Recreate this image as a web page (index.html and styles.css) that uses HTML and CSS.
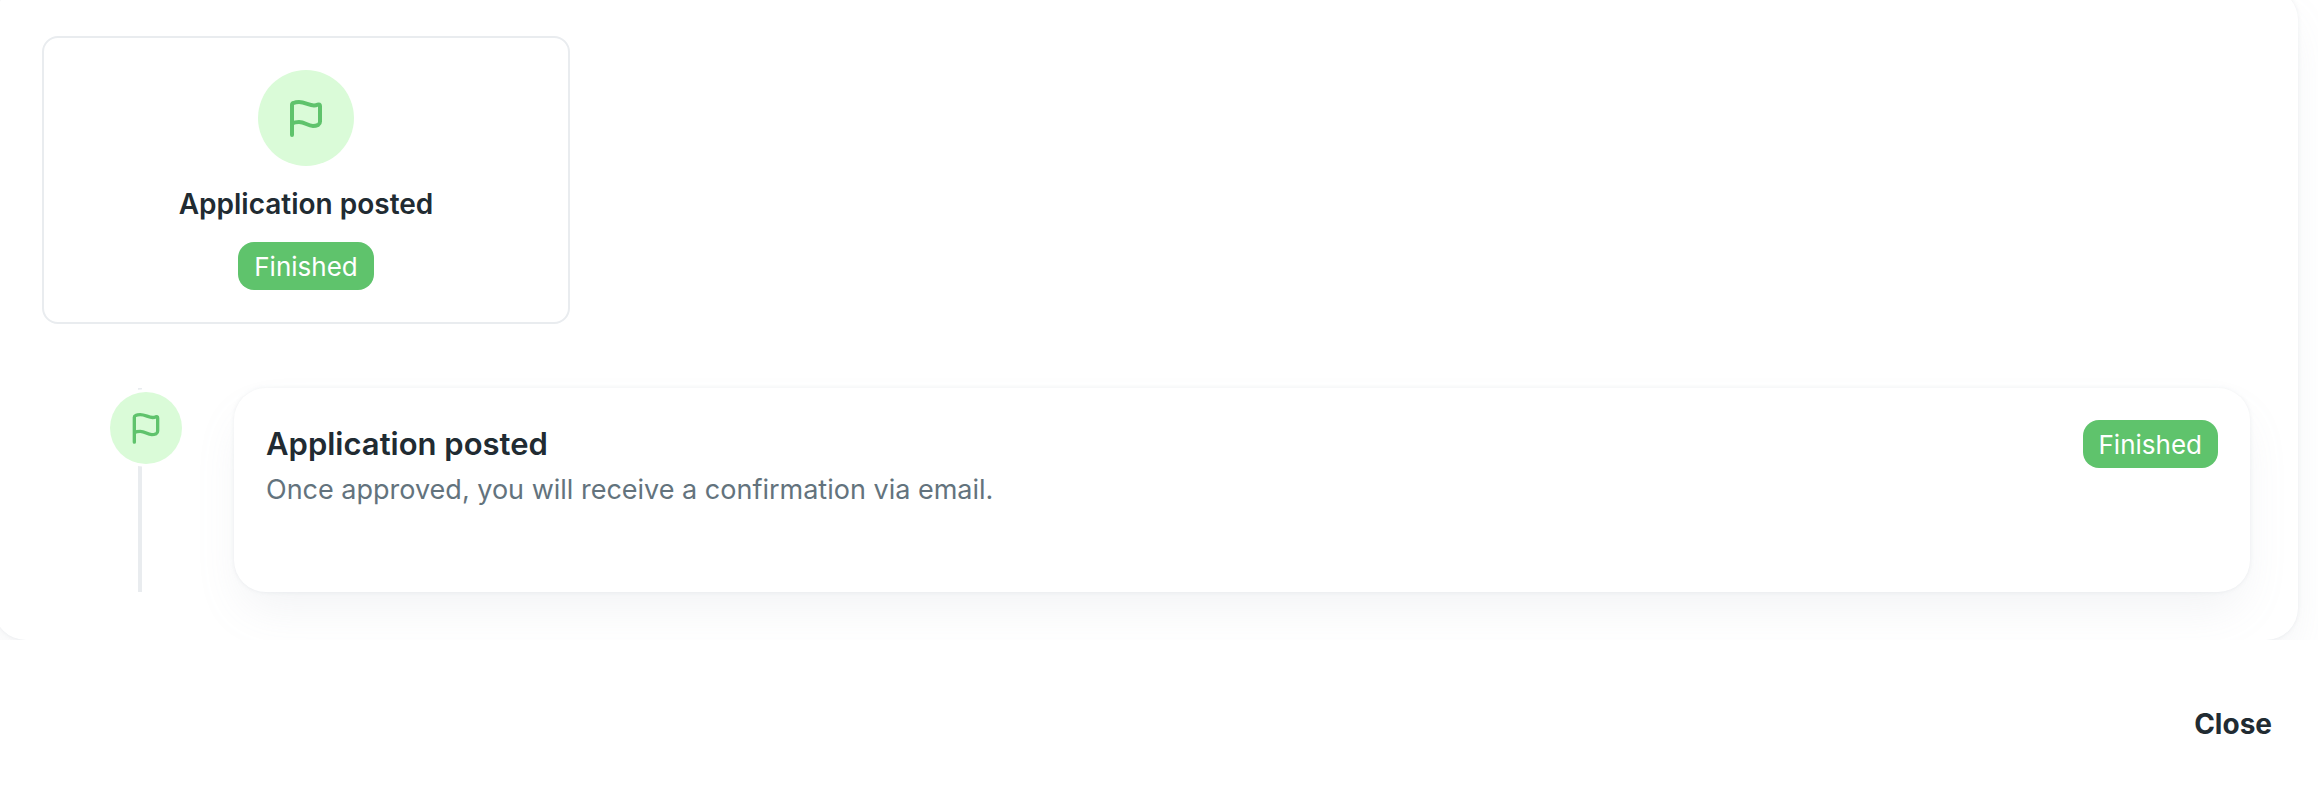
FILE: index.html
```html
<!DOCTYPE html>
<html lang="en">
<head>
<meta charset="utf-8">
<title>Application status</title>
<link rel="stylesheet" href="styles.css">
</head>
<body>
<svg class="sprite" aria-hidden="true">
  <symbol id="flag" viewBox="0 0 48 48">
    <path d="M10 41V11Q10 9.5 11.5 9C13 8.3 15 8 17 8C23 8 27 11.4 32 11.4C33.5 11.4 34.5 11.2 35.5 10.7Q38 9.8 38 12V27.5Q38 29.8 36.3 30.8C34.5 31.6 33 32 31 32C25.500 32 23 28 17 28C14.500 28 12 28.500 10 29.500" fill="none" stroke="currentColor" stroke-width="4" stroke-linecap="round" stroke-linejoin="round"/>
  </symbol>
</svg>
<div class="dialog-body">
  <main class="panel">
    <section class="step">
      <span class="avatar"><svg class="icon" aria-hidden="true"><use href="#flag"/></svg></span>
      <h2 class="step-title">Application posted</h2>
      <span class="badge">Finished</span>
    </section>
    <ol class="timeline">
      <li class="entry">
        <div class="rail">
          <span class="avatar avatar-small"><svg class="icon" aria-hidden="true"><use href="#flag"/></svg></span>
        </div>
        <article class="card">
          <div class="card-text">
            <h3 class="card-title">Application posted</h3>
            <p class="card-description">Once approved, you will receive a confirmation via email.</p>
          </div>
          <span class="badge">Finished</span>
        </article>
      </li>
    </ol>
  </main>
</div>
<footer class="actions">
  <button class="close" type="button">Close</button>
</footer>
</body>
</html>
```
FILE: styles.css
```css
* {
  box-sizing: border-box;
}

body {
  margin: 0;
  background: #fff;
  color: #212b32;
  font-family: Inter, "Liberation Sans", sans-serif;
  font-size: 28px;
  line-height: 44px;
}

h2, h3, p, ol {
  margin: 0;
  padding: 0;
}

.sprite {
  position: absolute;
  width: 0;
  height: 0;
}

.dialog-body {
  overflow: hidden;
}

.panel,
.card {
  border-radius: 32px;
  background: #fff;
  box-shadow: 0 0 4px rgba(145, 158, 171, 0.16), 0 24px 48px -8px rgba(145, 158, 171, 0.12);
}

.panel {
  margin: -12px 20px 0 -6px;
  padding: 48px;
}

.step {
  display: flex;
  flex-direction: column;
  align-items: center;
  width: 528px;
  max-width: 100%;
  padding: 32px;
  border: 2px solid #e9ecef;
  border-radius: 16px;
}

.avatar {
  display: grid;
  place-items: center;
  flex: none;
  width: 96px;
  height: 96px;
  border-radius: 50%;
  background: #dafbd8;
  color: #5fc36c;
}

.icon {
  width: 48px;
  height: 48px;
}

.avatar-small {
  width: 72px;
  height: 72px;
  margin-left: -28px;
  box-shadow: 0 0 0 3px #fff;
}

.avatar-small .icon {
  width: 40px;
  height: 40px;
}

.step-title {
  margin: 16px 0;
  font-size: 28px;
  font-weight: 600;
}

.badge {
  flex: none;
  padding: 1px 16px 0;
  border-radius: 16px;
  background: #5fc36c;
  color: #fff;
  font-size: 26px;
  line-height: 47px;
}

.timeline {
  margin-top: 64px;
  list-style: none;
}

.entry {
  display: flex;
  gap: 92px;
  padding-left: 96px;
}

.rail {
  flex: none;
  width: 4px;
  padding-top: 4px;
  background: #e9ecef;
}

.card {
  display: flex;
  flex: 1;
  align-items: flex-start;
  gap: 32px;
  min-height: 204px;
  padding: 32px;
}

.card-text {
  flex: 1;
}

.card-title {
  font-size: 31px;
  font-weight: 600;
  line-height: 48px;
}

.card-description {
  color: #63737d;
  font-size: 27px;
}

.actions {
  display: flex;
  justify-content: flex-end;
  padding: 50px 30px;
}

.close {
  padding: 12px 16px;
  border: 0;
  background: none;
  color: inherit;
  font: inherit;
  font-weight: 700;
  cursor: pointer;
}
```
